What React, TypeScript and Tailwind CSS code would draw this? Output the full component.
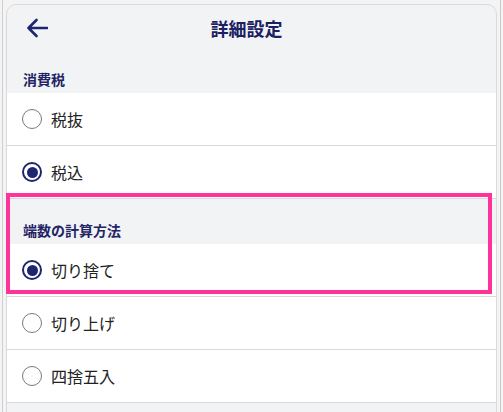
import React from "react";

type Option = { label: string; checked?: boolean };

const FONT = { fontFamily: '"Noto Sans CJK JP", "Noto Sans", sans-serif' };

function Radio({ checked }: { checked?: boolean }) {
  if (checked) {
    return (
      <span className="flex h-[20px] w-[20px] shrink-0 items-center justify-center rounded-full border-2 border-[#1f2670]">
        <span className="h-[11px] w-[11px] rounded-full bg-[#1f2670]" />
      </span>
    );
  }
  return <span className="h-[20px] w-[20px] shrink-0 rounded-full border-[1.5px] border-[#7a7a7a]" />;
}

function OptionRow({ label, checked }: Option) {
  return (
    <div className="flex h-[53px] items-center gap-[9px] border-b border-[#d9d9d9] bg-white px-[15px]">
      <Radio checked={checked} />
      <span className="text-[16px] leading-[20px] text-[#222]">{label}</span>
    </div>
  );
}

function SectionLabel({ title }: { title: string }) {
  return (
    <div className="flex h-[45px] items-end px-[16px] pb-[4px]">
      <span className="text-[14px] font-bold leading-[20px] text-[#1f2466]">{title}</span>
    </div>
  );
}

const taxOptions: Option[] = [{ label: "税抜" }, { label: "税込", checked: true }];

export default function App() {
  return (
    <div className="relative h-[412px] w-[503px] overflow-hidden bg-[#f4f4f5] pt-[4px]" style={FONT}>
      {/* window edges behind the sheet */}
      <div className="absolute left-[2px] top-0 h-full w-px bg-[#cfcfcf]" />
      <div className="absolute right-[2px] top-0 h-full w-px bg-[#c8c8cc]" />

      <div className="relative mx-[6px] h-[420px] rounded-t-[10px] border border-[#dadada] bg-[#f2f3f5]">
        {/* Header */}
        <div className="grid h-[43px] grid-cols-[60px_1fr_70px] items-center pt-[3px]">
          <svg className="ml-[19px]" width="22" height="20" viewBox="0 0 22 20" fill="none">
            <path
              d="M21 10H2.5M10.5 2L2.5 10L10.5 18"
              stroke="#1f2670"
              strokeWidth="2.6"
              strokeLinecap="round"
              strokeLinejoin="round"
            />
          </svg>
          <h1 className="text-center text-[18px] font-bold leading-[24px] text-[#1b2063]">詳細設定</h1>
          <span />
        </div>

        {/* 消費税 */}
        <SectionLabel title="消費税" />
        {taxOptions.map((o) => (
          <OptionRow key={o.label} {...o} />
        ))}

        {/* 端数の計算方法 */}
        <SectionLabel title="端数の計算方法" />
        <OptionRow label="切り捨て" checked />
        <OptionRow label="切り上げ" />
        <OptionRow label="四捨五入" />
      </div>

      {/* highlight frame */}
      <div className="pointer-events-none absolute left-[6px] top-[193px] h-[101px] w-[486px] border-4 border-[#ff3399]" />
    </div>
  );
}
